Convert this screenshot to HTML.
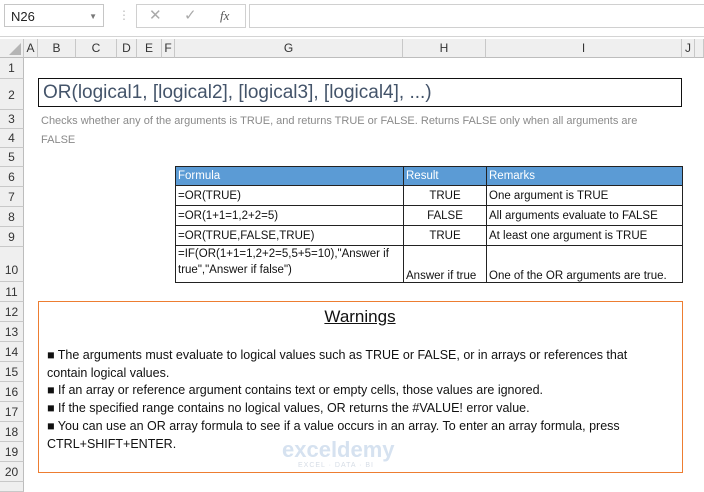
<!DOCTYPE html><html><head><style>
body{margin:0;width:704px;height:485px;background:#fff;font-family:"Liberation Sans",Calibri,sans-serif;position:relative;overflow:hidden}
.a{position:absolute}
.hd{position:absolute;top:39px;height:19px;background:#efefef;border-right:1px solid #c8c8c8;border-bottom:1px solid #bdbdbd;font-size:12px;color:#333;text-align:center;line-height:19px;box-sizing:border-box}
.rh{position:absolute;left:0;width:24px;background:#efefef;border-bottom:1px solid #c8c8c8;border-right:1px solid #bdbdbd;font-size:12px;color:#333;text-align:center;box-sizing:border-box}
table{border-collapse:collapse;position:absolute;left:175px;top:166px;font-size:11.5px}
td{border:1px solid #222;padding:0 2px;height:19px;box-sizing:border-box;color:#111}
.w{font-size:12.5px;color:#111;position:absolute;left:47px}
</style></head><body>
<div class="a" style="left:0;top:0;width:704px;height:36px;background:#fff;border-bottom:1px solid #d4d4d4"></div>
<div class="a" style="left:4px;top:4px;width:100px;height:23px;border:1px solid #c6c6c6;font-size:13px;line-height:23px;padding-left:6px;box-sizing:border-box;color:#222">N26<span style="position:absolute;right:6px;top:0;font-size:8px;color:#777">▼</span></div>
<div class="a" style="left:118px;top:8px;color:#bbb;font-size:12px">⋮</div>
<div class="a" style="left:136px;top:4px;width:110px;height:24px;border:1px solid #d0d0d0;box-sizing:border-box;color:#aaa;font-size:15px;line-height:22px"><span style="position:absolute;left:12px">✕</span><span style="position:absolute;left:47px">✓</span><span style="position:absolute;left:83px;font-family:'Liberation Serif';font-style:italic;font-size:13px;color:#555">fx</span></div>
<div class="a" style="left:249px;top:4px;width:460px;height:24px;border:1px solid #d0d0d0;box-sizing:border-box"></div>
<div class="hd" style="left:0;width:24px"><div style="position:absolute;right:2px;bottom:2px;width:0;height:0;border-left:12px solid transparent;border-bottom:12px solid #b5b5b5"></div></div>
<div class="hd" style="left:24px;width:14px">A</div>
<div class="hd" style="left:38px;width:38px">B</div>
<div class="hd" style="left:76px;width:41px">C</div>
<div class="hd" style="left:117px;width:20px">D</div>
<div class="hd" style="left:137px;width:25px">E</div>
<div class="hd" style="left:162px;width:13px">F</div>
<div class="hd" style="left:175px;width:228px">G</div>
<div class="hd" style="left:403px;width:83px">H</div>
<div class="hd" style="left:486px;width:196px">I</div>
<div class="hd" style="left:682px;width:13px">J</div>
<div class="hd" style="left:695px;width:9px"></div>
<div class="rh" style="top:58px;height:21px;line-height:21px">1</div>
<div class="rh" style="top:79px;height:31px;line-height:33px">2</div>
<div class="rh" style="top:110px;height:19px;line-height:19px">3</div>
<div class="rh" style="top:129px;height:19px;line-height:19px">4</div>
<div class="rh" style="top:148px;height:19px;line-height:19px">5</div>
<div class="rh" style="top:167px;height:20px;line-height:20px">6</div>
<div class="rh" style="top:187px;height:20px;line-height:20px">7</div>
<div class="rh" style="top:207px;height:20px;line-height:20px">8</div>
<div class="rh" style="top:227px;height:20px;line-height:20px">9</div>
<div class="rh" style="top:247px;height:35px;line-height:46px">10</div>
<div class="rh" style="top:282px;height:20px;line-height:20px">11</div>
<div class="rh" style="top:302px;height:20px;line-height:20px">12</div>
<div class="rh" style="top:322px;height:20px;line-height:20px">13</div>
<div class="rh" style="top:342px;height:20px;line-height:20px">14</div>
<div class="rh" style="top:362px;height:20px;line-height:20px">15</div>
<div class="rh" style="top:382px;height:20px;line-height:20px">16</div>
<div class="rh" style="top:402px;height:20px;line-height:20px">17</div>
<div class="rh" style="top:422px;height:20px;line-height:20px">18</div>
<div class="rh" style="top:442px;height:20px;line-height:20px">19</div>
<div class="rh" style="top:462px;height:20px;line-height:20px">20</div>
<div class="rh" style="top:482px;height:10px"></div>
<div class="a" style="left:38px;top:78px;width:644px;height:29px;border:1px solid #111;box-sizing:border-box;font-size:19px;color:#44546a;line-height:28px;padding-left:4px">OR(logical1, [logical2], [logical3], [logical4], ...)</div>
<div class="a" style="left:41px;top:112px;width:625px;font-size:11px;line-height:19px;color:#8a8a8a">Checks whether any of the arguments is TRUE, and returns TRUE or FALSE. Returns FALSE only when all arguments are FALSE</div>
<table>
<tr style="background:#5b9bd5"><td style="width:228px;color:#fff">Formula</td><td style="width:83px;color:#fff">Result</td><td style="width:196px;color:#fff">Remarks</td></tr>
<tr><td style="height:20px">=OR(TRUE)</td><td style="text-align:center">TRUE</td><td>One argument is TRUE</td></tr>
<tr><td style="height:20px">=OR(1+1=1,2+2=5)</td><td style="text-align:center">FALSE</td><td>All arguments evaluate to FALSE</td></tr>
<tr><td style="height:20px">=OR(TRUE,FALSE,TRUE)</td><td style="text-align:center">TRUE</td><td>At least one argument is TRUE</td></tr>
<tr><td style="height:37px;line-height:16px;vertical-align:top">=IF(OR(1+1=1,2+2=5,5+5=10),"Answer if true","Answer if false")</td><td style="vertical-align:bottom;white-space:nowrap">Answer if true</td><td style="vertical-align:bottom">One of the OR arguments are true.</td></tr>
</table>
<div class="a" style="left:38px;top:301px;width:645px;height:172px;border:1px solid #ed7d31;box-sizing:border-box"></div>
<div class="a" style="left:0;top:307px;width:720px;text-align:center;font-size:17px;text-decoration:underline;color:#111">Warnings</div>
<div class="a" style="left:282px;top:437px;font-size:22px;font-weight:bold;color:#d6e2f0">exceldemy</div>
<div class="a" style="left:298px;top:462px;font-size:7px;color:#d6dde6;letter-spacing:1px">EXCEL · DATA · BI</div>
<div class="w" style="top:348px">■ The arguments must evaluate to logical values such as TRUE or FALSE, or in arrays or references that</div>
<div class="w" style="top:366px">contain logical values.</div>
<div class="w" style="top:383px">■ If an array or reference argument contains text or empty cells, those values are ignored.</div>
<div class="w" style="top:401px">■ If the specified range contains no logical values, OR returns the #VALUE! error value.</div>
<div class="w" style="top:419px">■ You can use an OR array formula to see if a value occurs in an array. To enter an array formula, press</div>
<div class="w" style="top:437px">CTRL+SHIFT+ENTER.</div>
</body></html>
